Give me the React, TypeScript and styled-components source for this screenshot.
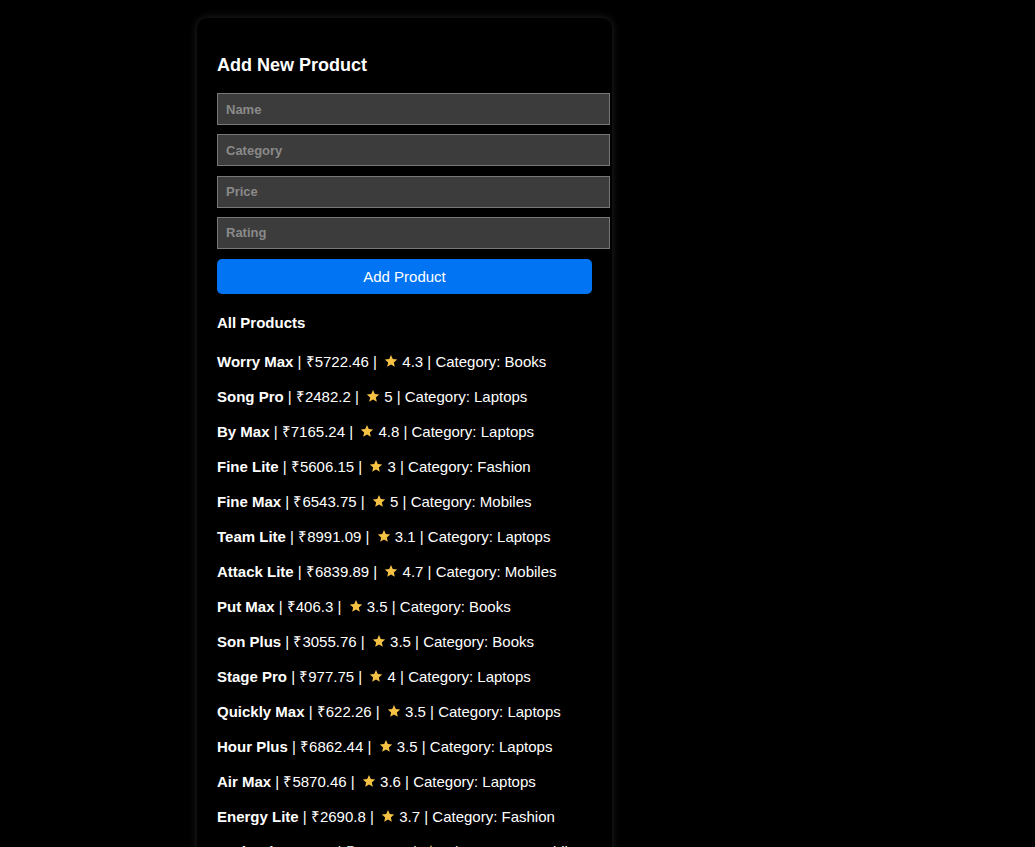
import React from "react";
import styled, { createGlobalStyle } from "styled-components";

const GlobalStyle = createGlobalStyle`
  html, body {
    margin: 0;
    padding: 0;
    background: #000;
  }
  body {
    padding: 8px;
    font-family: "Liberation Sans", Arial, sans-serif;
    color: #fff;
  }
`;

const Page = styled.div`
  display: flex;
  justify-content: flex-start;
  padding: 10px 0 0 189px;
`;

const Card = styled.div`
  width: 375px;
  padding: 20px;
  background: #000;
  border-radius: 10px;
  box-shadow: 0 0 8px rgba(255, 255, 255, 0.14);
`;

const Title = styled.h2`
  margin: 17px 0 17px;
  font-size: 18px;
  line-height: 21px;
  font-weight: 700;
  color: #fff;
`;

const Form = styled.form`
  display: flex;
  flex-direction: column;
  gap: 9.33px;
`;

const Input = styled.input`
  display: block;
  width: 100%;
  box-sizing: content-box;
  height: 14px;
  padding: 8px;
  border: 1px solid #777;
  background: #3c3c3c;
  color: #fff;
  font-family: "Liberation Sans", Arial, sans-serif;
  font-size: 13px;
  font-weight: 700;
  outline: none;
  &::placeholder {
    color: #8a8a8a;
  }
`;

const Button = styled.button`
  width: 100%;
  height: 35px;
  margin-top: 1px;
  border: none;
  border-radius: 5px;
  background: #0074f2;
  color: #fff;
  font-family: "Liberation Sans", Arial, sans-serif;
  font-size: 15px;
  cursor: pointer;
`;

const ListTitle = styled.h3`
  margin: 20px 0 13px;
  font-size: 15px;
  line-height: 17px;
  font-weight: 700;
`;

const List = styled.ul`
  list-style: none;
  margin: 0;
  padding: 0;
`;

const Item = styled.li`
  padding: 9px 0;
  font-size: 15px;
  line-height: 17px;
  white-space: nowrap;
`;

const Name = styled.strong`
  font-weight: 700;
`;

const StarIcon = styled.svg`
  display: inline-block;
  width: 14px;
  height: 14px;
  margin: 0 0 0 3px;
  vertical-align: -1px;
`;

type Product = { name: string; price: string; rating: string; category: string };

const products: Product[] = [
  { name: "Worry Max", price: "5722.46", rating: "4.3", category: "Books" },
  { name: "Song Pro", price: "2482.2", rating: "5", category: "Laptops" },
  { name: "By Max", price: "7165.24", rating: "4.8", category: "Laptops" },
  { name: "Fine Lite", price: "5606.15", rating: "3", category: "Fashion" },
  { name: "Fine Max", price: "6543.75", rating: "5", category: "Mobiles" },
  { name: "Team Lite", price: "8991.09", rating: "3.1", category: "Laptops" },
  { name: "Attack Lite", price: "6839.89", rating: "4.7", category: "Mobiles" },
  { name: "Put Max", price: "406.3", rating: "3.5", category: "Books" },
  { name: "Son Plus", price: "3055.76", rating: "3.5", category: "Books" },
  { name: "Stage Pro", price: "977.75", rating: "4", category: "Laptops" },
  { name: "Quickly Max", price: "622.26", rating: "3.5", category: "Laptops" },
  { name: "Hour Plus", price: "6862.44", rating: "3.5", category: "Laptops" },
  { name: "Air Max", price: "5870.46", rating: "3.6", category: "Laptops" },
  { name: "Energy Lite", price: "2690.8", rating: "3.7", category: "Fashion" },
  { name: "Technology Max", price: "7957.64", rating: "5", category: "Mobiles" },
  { name: "Quickly Pro", price: "1534.2", rating: "4.1", category: "Books" },
];

const Star = () => (
  <StarIcon viewBox="0 0 24 24" aria-hidden="true">
    <path
      d="M12 1.8l3.05 6.9 7.5.7-5.68 4.98 1.68 7.36L12 17.9l-6.55 3.84 1.68-7.36L1.45 9.4l7.5-.7z"
      fill="#f6c244"
    />
  </StarIcon>
);

export default function App() {
  return (
    <>
      <GlobalStyle />
      <Page>
        <Card>
          <Title>Add New Product</Title>
          <Form onSubmit={(e) => e.preventDefault()}>
            <Input placeholder="Name" />
            <Input placeholder="Category" />
            <Input placeholder="Price" />
            <Input placeholder="Rating" />
            <Button type="submit">Add Product</Button>
          </Form>
          <ListTitle>All Products</ListTitle>
          <List>
            {products.map((p) => (
              <Item key={p.name}>
                <Name>{p.name}</Name> | ₹{p.price} | <Star /> {p.rating} | Category: {p.category}
              </Item>
            ))}
          </List>
        </Card>
      </Page>
    </>
  );
}
